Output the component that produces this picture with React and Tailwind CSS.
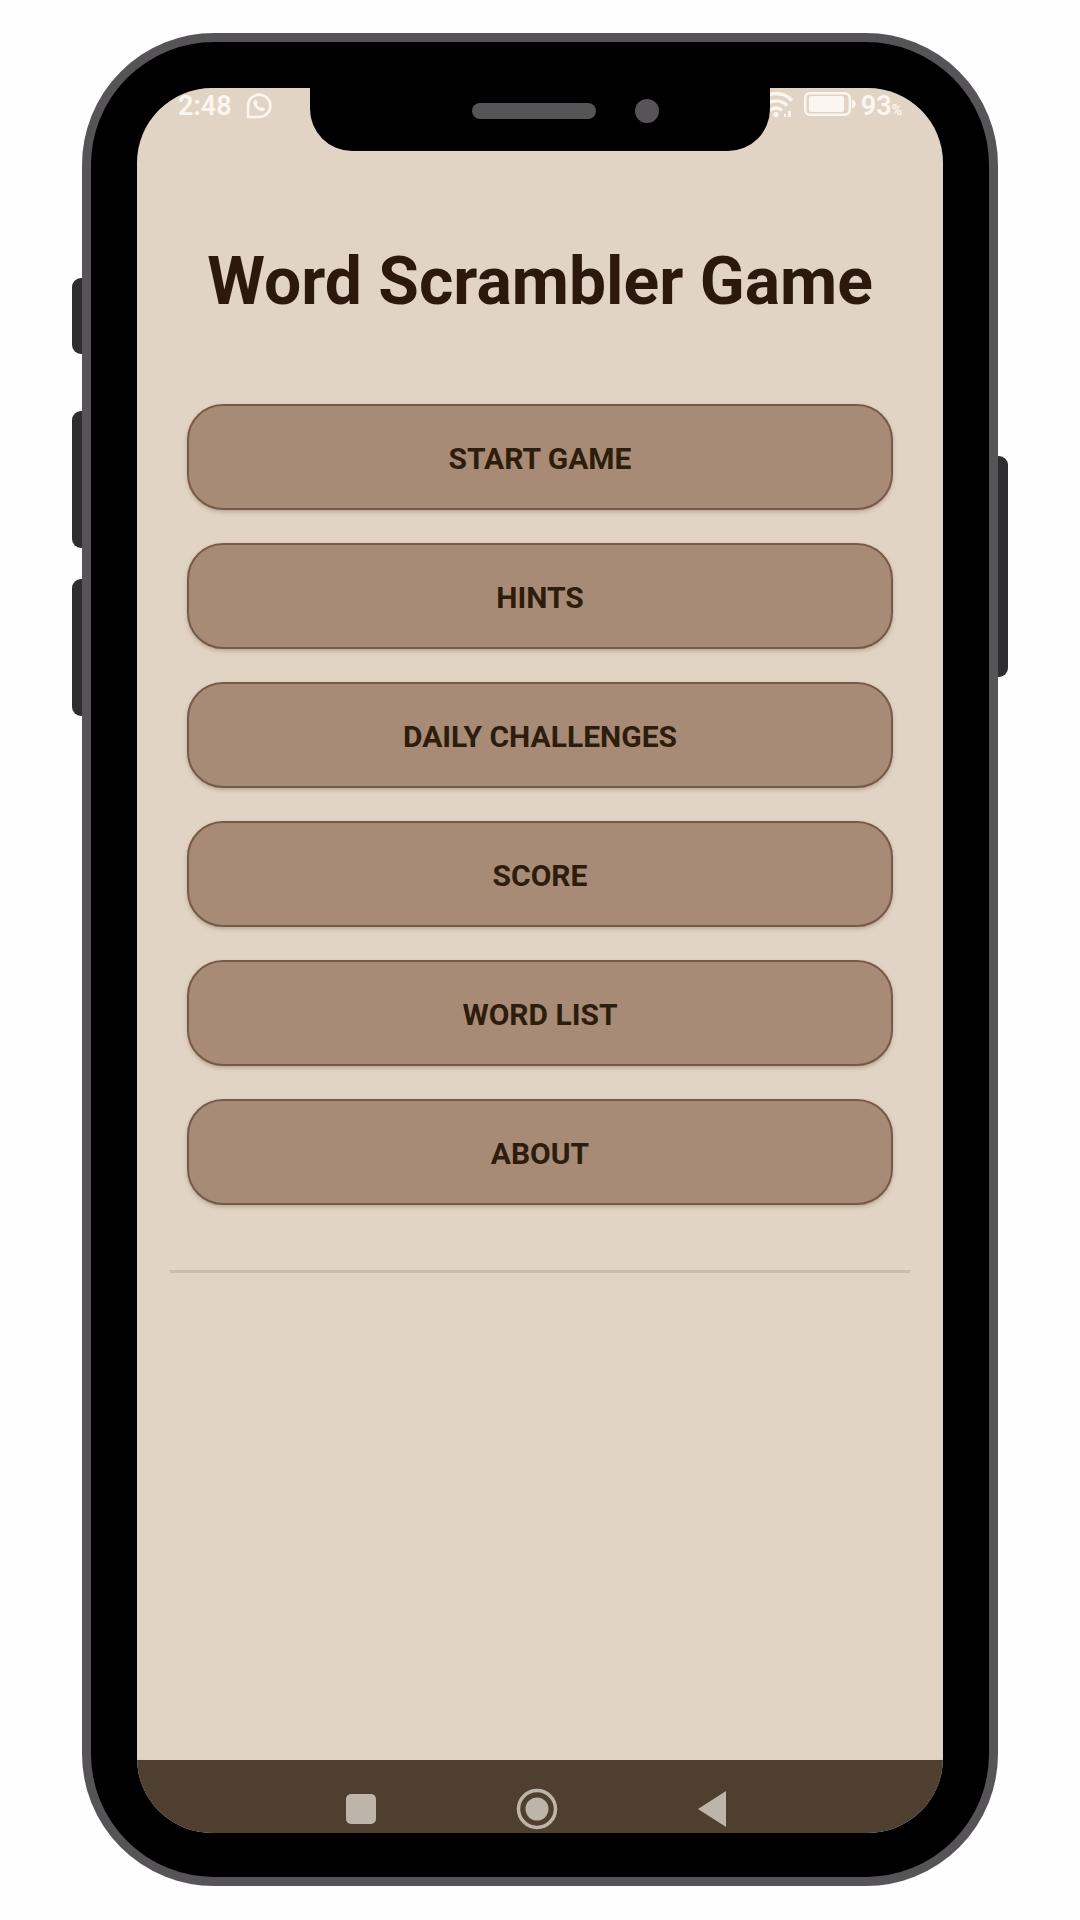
import React, { useState } from 'react';

const MENU_ITEMS = [
  'START GAME',
  'HINTS',
  'DAILY CHALLENGES',
  'SCORE',
  'WORD LIST',
  'ABOUT',
];

const WhatsappIcon = () => (
  <svg width="26" height="26" viewBox="0 0 26 26" fill="none" aria-hidden="true">
    <path
      d="M2 24V13A11.2 11.2 0 1 1 13.2 24Z"
      stroke="currentColor"
      strokeWidth="2.6"
      strokeLinejoin="round"
    />
    <path
      d="M8.6 7.2c.8-.7 1.7-.5 2.1.4l.8 1.8c.2.6 0 1-.8 1.9.8 1.7 2 2.9 3.8 3.7.9-.9 1.3-1.1 1.9-.9l1.8.9c.8.4.9 1.2.3 2-1 1.3-2.6 1.6-4.4.9-3.3-1.2-5.5-3.5-6.5-6.6-.5-1.7-.1-3.2 1-4.1Z"
      fill="currentColor"
    />
  </svg>
);

const WifiIcon = () => (
  <svg width="36" height="26" viewBox="0 0 36 26" fill="none" aria-hidden="true">
    <g stroke="currentColor" strokeWidth="3.4">
      <path d="M2 8.5a22 22 0 0 1 32 0" />
      <path d="M7 13.5a15.5 15.5 0 0 1 22 0" />
      <path d="M12 18.5a8.5 8.5 0 0 1 12 0" />
    </g>
    <circle cx="18" cy="22.5" r="2.6" fill="currentColor" />
    <path d="M26 22h2v3h-2zM30 19h3v6h-3z" fill="currentColor" />
  </svg>
);

const BatteryIcon = () => (
  <svg width="52" height="24" viewBox="0 0 52 24" fill="none" aria-hidden="true">
    <rect x="1.2" y="1.2" width="44.6" height="21.6" rx="5" stroke="currentColor" strokeWidth="2.4" />
    <rect x="5" y="4" width="35" height="16" rx="2" fill="currentColor" />
    <path d="M48 7.5c2 0 3.5 2 3.5 4.5s-1.5 4.5-3.5 4.5z" fill="currentColor" />
  </svg>
);

const StatusBar = () => (
  <div className="flex h-[63px] items-start justify-between px-[41px] pt-1 text-[27px] leading-[28px] font-semibold text-[#fbf6f0]">
    <div className="flex items-center gap-[14px]">
      <span>2:48</span>
      <WhatsappIcon />
    </div>
    <div className="flex items-start gap-[5px]">
      <div className="flex items-start gap-[10px]">
        <WifiIcon />
        <BatteryIcon />
      </div>
      <span className="flex items-baseline">
        93<span className="text-[14px]">%</span>
      </span>
    </div>
  </div>
);

const Notch = () => (
  <div className="absolute inset-x-0 top-0 mx-auto grid h-[63px] w-[57%] grid-cols-[162fr_124px_173fr] items-center rounded-b-[42px] bg-black pb-[17px]">
    <span className="col-start-2 h-4 rounded-full bg-[#565457]" />
    <span className="ml-[39px] h-6 w-6 rounded-full bg-[#565457]" />
  </div>
);

const SystemNav = () => (
  <div className="flex h-[73px] justify-center gap-[134px] bg-[#4e3f31] pt-7 pr-[7px] text-[#bdb5a9]">
    <button type="button" aria-label="Recent apps" className="h-[42px] w-[42px]">
      <svg viewBox="0 0 42 42">
        <rect x="6" y="6" width="30" height="30" rx="5" fill="currentColor" />
      </svg>
    </button>
    <button type="button" aria-label="Home" className="h-[42px] w-[42px]">
      <svg viewBox="0 0 42 42">
        <circle cx="21" cy="21" r="18.5" fill="none" stroke="currentColor" strokeWidth="3.5" />
        <circle cx="21" cy="21" r="11.5" fill="currentColor" />
      </svg>
    </button>
    <button type="button" aria-label="Back" className="h-[42px] w-[42px]">
      <svg viewBox="0 0 42 42">
        <path d="M6 21 34 3v36z" fill="currentColor" />
      </svg>
    </button>
  </div>
);

export default function App() {
  const [selected, setSelected] = useState(null);

  return (
    <div className="flex min-h-screen bg-[#fefefe] px-[82px] pt-[33px] pb-[34px] font-[Roboto,sans-serif]">
      <div className="relative flex flex-1 rounded-[132px] border-[9px] border-[#565457] bg-black px-[46px] pt-[46px] pb-11">
        {/* Hardware buttons */}
        <span className="absolute top-[236px] -left-[19px] h-[76px] w-[10px] rounded-l-[9px] bg-[#2e2d30]" />
        <span className="absolute top-[369px] -left-[19px] h-[137px] w-[10px] rounded-l-[9px] bg-[#2e2d30]" />
        <span className="absolute top-[537px] -left-[19px] h-[137px] w-[10px] rounded-l-[9px] bg-[#2e2d30]" />
        <span className="absolute top-[414px] -right-[19px] h-[221px] w-[10px] rounded-r-[9px] bg-[#2e2d30]" />

        <div className="relative flex flex-1 flex-col overflow-hidden rounded-[75px] bg-[#e2d4c4]">
          <StatusBar />
          <Notch />

          <main className="flex-1 px-[33px] pt-[91px]">
            <h1 className="text-center text-[66px] leading-[80px] font-bold text-[#2a190c]">
              Word Scrambler Game
            </h1>

            <div className="mt-[82px] flex flex-col gap-[33px] px-[17px]">
              {MENU_ITEMS.map((item) => (
                <button
                  key={item}
                  type="button"
                  aria-pressed={selected === item}
                  onClick={() => setSelected(item)}
                  className="h-[106px] rounded-[36px] border-2 border-[#765a48] bg-[#a78b76] pt-[2px] text-[30px] font-bold text-[#2e1c0c] shadow-[0_2px_4px_rgba(90,60,40,0.3)]"
                >
                  {item}
                </button>
              ))}
            </div>

            <hr className="mt-[65px] border-t-[3px] border-[#cdbcac]" />
          </main>

          <SystemNav />
        </div>
      </div>
    </div>
  );
}
